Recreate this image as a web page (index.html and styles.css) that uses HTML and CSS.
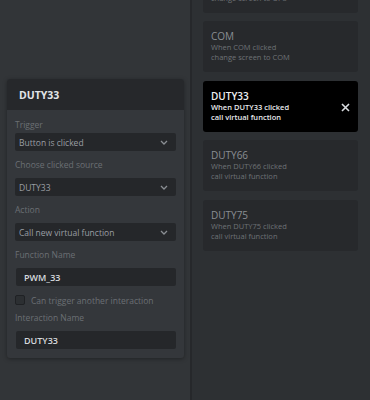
FILE: index.html
```html
<!DOCTYPE html>
<html lang="en">
<head>
    <meta charset="UTF-8">
    <meta name="viewport" content="width=device-width, initial-scale=1.0">
    <title>Interactions</title>
    <link rel="stylesheet" href="styles.css">
</head>
<body>
    <div class="app">
        <!-- Interaction editor -->
        <div class="editor-pane">
            <div class="panel">
                <div class="panel-header">
                    <h3 class="panel-title">DUTY33</h3>
                </div>
                <div class="panel-body">
                    <label class="field-label first">Trigger</label>
                    <div class="select">
                        <span>Button is clicked</span>
                        <svg class="chevron" width="8" height="5" viewBox="0 0 8 5"><path d="M1 1 L4 4 L7 1" fill="none" stroke="currentColor" stroke-width="1.3"/></svg>
                    </div>

                    <label class="field-label">Choose clicked source</label>
                    <div class="select">
                        <span>DUTY33</span>
                        <svg class="chevron" width="8" height="5" viewBox="0 0 8 5"><path d="M1 1 L4 4 L7 1" fill="none" stroke="currentColor" stroke-width="1.3"/></svg>
                    </div>

                    <label class="field-label">Action</label>
                    <div class="select">
                        <span>Call new virtual function</span>
                        <svg class="chevron" width="8" height="5" viewBox="0 0 8 5"><path d="M1 1 L4 4 L7 1" fill="none" stroke="currentColor" stroke-width="1.3"/></svg>
                    </div>

                    <label class="field-label">Function Name</label>
                    <div class="text-input">PWM_33</div>

                    <div class="check-row">
                        <span class="checkbox"></span>
                        <span class="check-text">Can trigger another interaction</span>
                    </div>

                    <label class="field-label">Interaction Name</label>
                    <div class="text-input">DUTY33</div>
                </div>
            </div>
        </div>

        <!-- Interaction list -->
        <div class="list-pane">
            <div class="card-list">
                <div class="card">
                    <div class="card-info">
                        <div class="card-title">UPS</div>
                        <div class="card-text">When UPS clicked<br>change screen to UPS</div>
                    </div>
                </div>
                <div class="card">
                    <div class="card-info">
                        <div class="card-title">COM</div>
                        <div class="card-text">When COM clicked<br>change screen to COM</div>
                    </div>
                </div>
                <div class="card active">
                    <div class="card-info">
                        <div class="card-title">DUTY33</div>
                        <div class="card-text">When DUTY33 clicked<br>call virtual function</div>
                    </div>
                    <svg class="close-icon" width="9" height="9" viewBox="0 0 9 9"><path d="M1 1 L8 8 M8 1 L1 8" stroke="currentColor" stroke-width="1.6"/></svg>
                </div>
                <div class="card">
                    <div class="card-info">
                        <div class="card-title">DUTY66</div>
                        <div class="card-text">When DUTY66 clicked<br>call virtual function</div>
                    </div>
                </div>
                <div class="card">
                    <div class="card-info">
                        <div class="card-title">DUTY75</div>
                        <div class="card-text">When DUTY75 clicked<br>call virtual function</div>
                    </div>
                </div>
            </div>
        </div>
    </div>
</body>
</html>
```

FILE: styles.css
```css
/* Global */
* {
    box-sizing: border-box;
    font-family: "Open Sans", Arial, sans-serif;
}

body {
    margin: 0;
    padding: 0;
    background-color: #2d3033;
}

.app {
    display: flex;
    height: 400px;
    overflow: hidden;
}

/* Left pane */
.editor-pane {
    width: 192px;
    flex-shrink: 0;
    background-color: #323538;
    border-right: 2px solid #26282b;
    padding: 79px 6px 0 7px;
}

.panel {
    background-color: #34373b;
    border-radius: 3px;
    box-shadow: 0 1px 4px rgba(0, 0, 0, 0.35);
    overflow: hidden;
}

.panel-header {
    background-color: #26282b;
    height: 31px;
    display: flex;
    align-items: center;
    padding-left: 12px;
}

.panel-title {
    margin: 0;
    font-size: 10.5px;
    font-weight: bold;
    color: #e2e5e8;
}

.panel-body {
    display: flex;
    flex-direction: column;
    padding: 9px 8px 9px 8px;
}

.field-label {
    font-size: 8.5px;
    line-height: 12px;
    color: #6b6f74;
    margin: 8px 0 7px;
}

.field-label.first {
    margin-top: 0;
    margin-bottom: 2px;
}

.select {
    height: 18px;
    background-color: #25272a;
    border-radius: 2px;
    display: flex;
    align-items: center;
    justify-content: space-between;
    padding: 0 8px 0 4px;
    font-size: 8.5px;
    color: #9a9ea3;
}

.chevron {
    color: #8a8e93;
}

.text-input {
    height: 18px;
    background-color: #25272a;
    border-radius: 2px;
    margin-left: 1px;
    display: flex;
    align-items: center;
    padding-left: 8px;
    font-size: 9px;
    font-weight: 600;
    color: #d6d9dd;
}

.check-row {
    display: flex;
    align-items: center;
    gap: 6px;
    height: 12px;
    margin-top: 8px;
    margin-bottom: -2px;
}

.checkbox {
    width: 10px;
    height: 10px;
    border: 1px solid #1f2124;
    border-radius: 2px;
    background-color: #2c2f32;
}

.check-text {
    font-size: 8.5px;
    color: #6b6f74;
}

/* Right pane */
.list-pane {
    flex-grow: 1;
    background-color: #2d3033;
    padding: 0 12px 0 11px;
}

.card-list {
    display: flex;
    flex-direction: column;
    gap: 8.5px;
    margin-top: -38.5px;
}

.card {
    height: 51px;
    flex-shrink: 0;
    background-color: #27292c;
    border-radius: 3px;
    padding: 9px 8px 0 8px;
    display: flex;
    justify-content: space-between;
}

.card-title {
    font-size: 10px;
    line-height: 12px;
    color: #8a8e93;
}

.card-text {
    font-size: 7.5px;
    line-height: 10px;
    color: #6e7276;
}

.card.active {
    background-color: #000000;
}

.card.active .card-title {
    color: #eef0f2;
    font-weight: 600;
}

.card.active .card-text {
    color: #e8eaec;
    font-weight: 600;
}

.close-icon {
    color: #d9dce0;
    margin-top: 13px;
}
```
